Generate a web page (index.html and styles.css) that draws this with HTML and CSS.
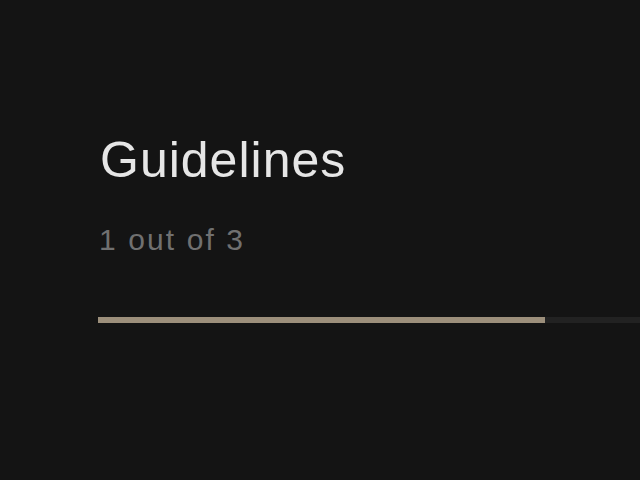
FILE: index.html
```html
<!DOCTYPE html>
<html>
<head>
<meta charset="utf-8">
<link rel="stylesheet" href="styles.css">
</head>
<body>
<main class="screen">
  <h1 class="title">Guidelines</h1>
  <p class="step">1 out of 3</p>
  <div class="track"><div class="fill" style="width: 447px"></div></div>
</main>
</body>
</html>
```

FILE: styles.css
```css
html, body {
  margin: 0;
  padding: 0;
  background: #141414;
  width: 640px;
  height: 480px;
  overflow: hidden;
}
.screen {
  padding: 130px 0 0 98px;
  font-family: "Liberation Sans", Arial, sans-serif;
}
.title {
  margin: 0 0 0 2px;
  font-size: 50px;
  font-weight: 400;
  line-height: 60px;
  color: #e6e6e6;
  letter-spacing: 1px;
}
.step {
  margin: 34px 0 0 1px;
  font-size: 30px;
  line-height: 32px;
  color: #707070;
  letter-spacing: 2.1px;
}
.track {
  margin-top: 61px;
  height: 6px;
  background: #222222;
}
.fill {
  height: 100%;
  background: #9c8f7b;
}
```
